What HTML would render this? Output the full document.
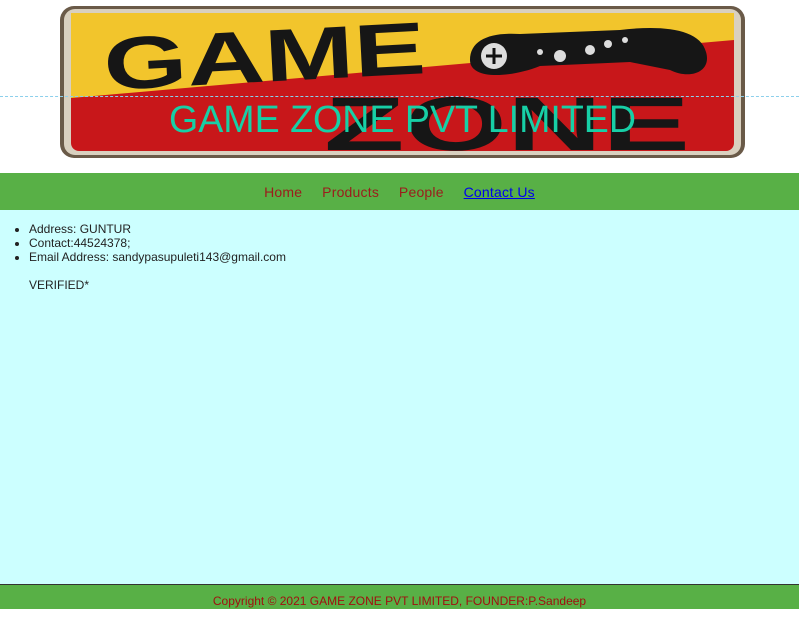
<!DOCTYPE html>
<html><head><style>
body{margin:0;width:799px;height:609px;overflow:hidden;font-family:"Liberation Sans",sans-serif;background:#fff;position:relative}
#hdr{position:absolute;left:0;top:0;width:799px;height:173px;background:#fff}
#dash{position:absolute;left:0;top:96px;width:799px;border-top:1px dashed #8cd0ec}
#title{position:absolute;left:0;width:805px;top:97px;text-align:center;font-size:37.6px;color:#17cfa6;line-height:44px}
#nav{position:absolute;top:173px;left:0;width:799px;height:37px;background:#58b046;text-align:center;font-size:14px;line-height:38px}
#nav a{color:#9c1c1c;text-decoration:none;margin:0 8px;letter-spacing:.2px}
#nav a.u{color:#0000ee;text-decoration:underline}
#main{position:absolute;top:210px;left:0;width:799px;height:374px;background:#ccffff;font-size:12px;color:#222}
#main ul{margin:12px 0 0 0;padding-left:29px;line-height:14px}
#main p{margin:14px 0 0 29px}
#foot{position:absolute;top:584px;left:0;width:799px;height:24px;background:#58b046;border-top:1px solid #333;text-align:center;font-size:12px;color:#a01010;line-height:32px}
</style></head><body>
<div id="hdr">
<svg width="799" height="173" style="position:absolute;left:0;top:0">
<rect x="60" y="6" width="685" height="152" rx="14" fill="#6a5a48"/>
<rect x="64" y="9" width="677" height="146" rx="11" fill="#d9d0bf"/>
<rect x="71" y="13" width="663" height="138" rx="8" fill="#c8171a"/>
<polygon points="71,13 734,13 734,40 71,98" fill="#f2c52c"/>
<text x="105" y="90" font-family="Liberation Sans" font-weight="bold" font-size="74" fill="#161616" textLength="322" lengthAdjust="spacingAndGlyphs" transform="rotate(-3 105 90)">GAME</text>
<text x="324" y="150" font-family="Liberation Sans" font-weight="bold" font-size="76" fill="#161616" textLength="366" lengthAdjust="spacingAndGlyphs">ZONE</text>
<path d="M470,60 C470,40 490,32 520,34 L620,30 C660,25 700,28 706,52 C712,72 690,80 670,70 L630,62 L540,66 C510,78 470,80 470,60 Z" fill="#161616"/>
<circle cx="494" cy="56" r="13" fill="#ddd"/>
<path d="M486,56h16M494,48v16" stroke="#111" stroke-width="3"/>
<circle cx="560" cy="56" r="6" fill="#ddd"/><circle cx="590" cy="50" r="5" fill="#ddd"/><circle cx="608" cy="44" r="4" fill="#ddd"/><circle cx="540" cy="52" r="3" fill="#ddd"/><circle cx="625" cy="40" r="3" fill="#ddd"/>
</svg>
<div id="dash"></div>
<div id="title">GAME ZONE PVT LIMITED</div>
</div>
<div id="nav"><a>Home</a> <a>Products</a> <a>People</a> <a class="u">Contact Us</a></div>
<div id="main"><ul><li>Address: GUNTUR</li><li>Contact:44524378;</li><li>Email Address: sandypasupuleti143@gmail.com</li></ul><p>VERIFIED*</p></div>
<div id="foot">Copyright © 2021 GAME ZONE PVT LIMITED, FOUNDER:P.Sandeep</div>
</body></html>
